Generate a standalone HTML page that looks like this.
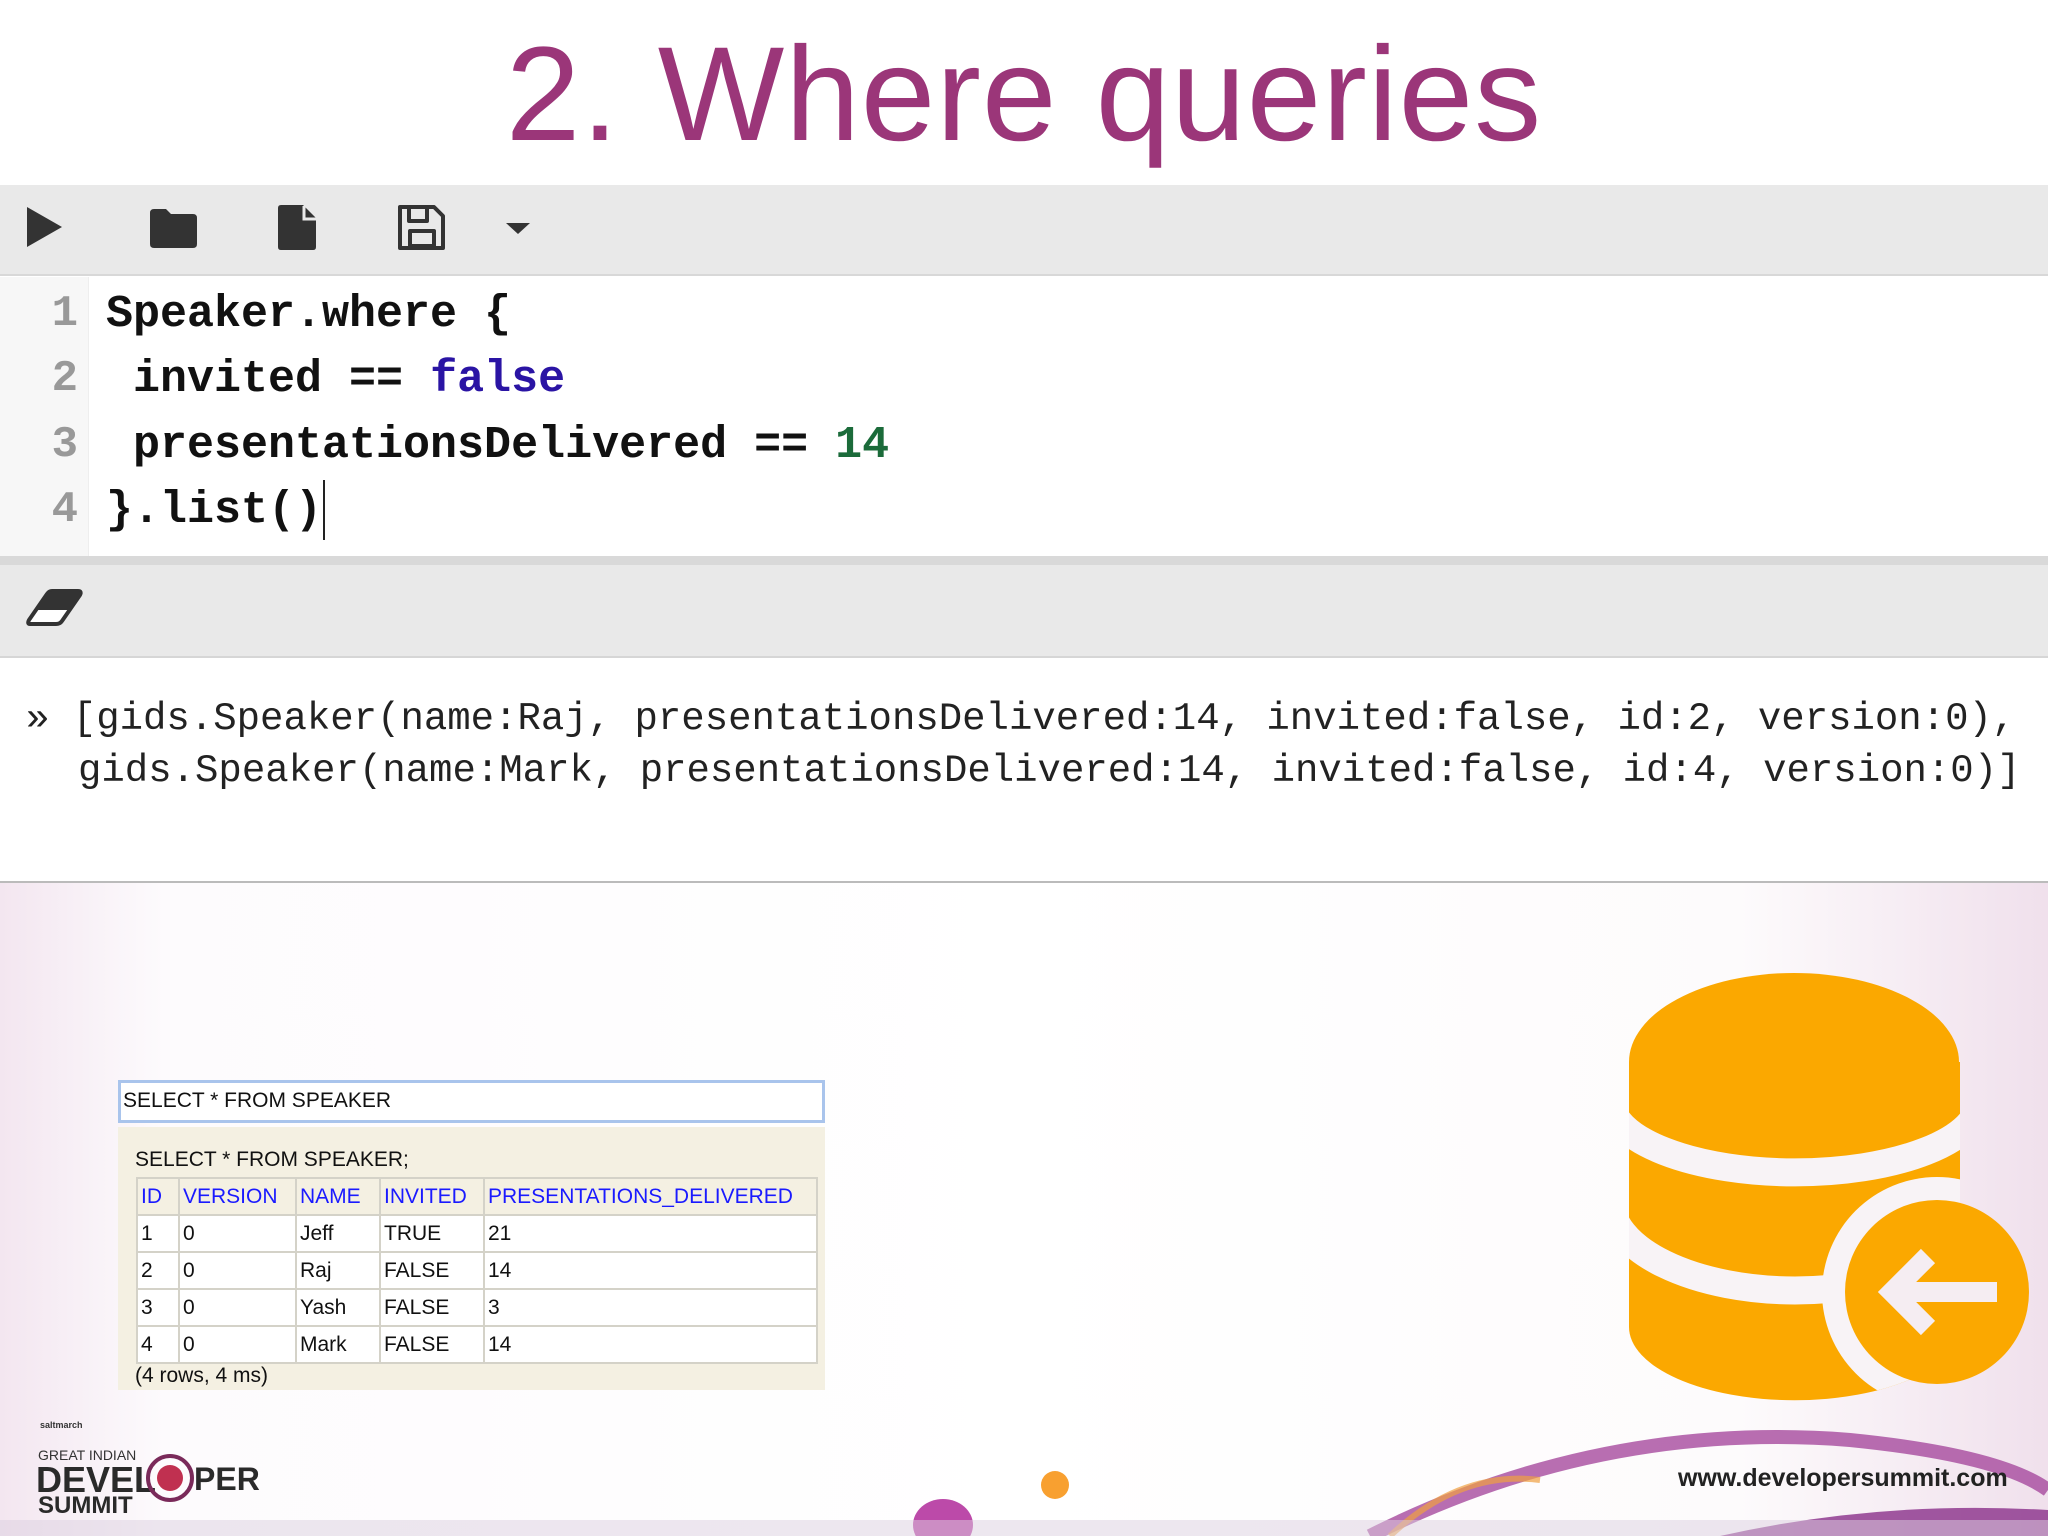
<!DOCTYPE html>
<html><head><meta charset="utf-8"><style>
*{margin:0;padding:0;box-sizing:border-box}
body{width:2048px;height:1536px;overflow:hidden;position:relative;background:#fff;font-family:"Liberation Sans",sans-serif}
.abs{position:absolute}
#title{left:0;width:2048px;top:20px;text-align:center;font-size:134px;color:#9b3679;font-family:"Liberation Sans",sans-serif;letter-spacing:1px;line-height:150px}
#tb{left:0;top:185px;width:2048px;height:91px;background:#e9e9e9;border-bottom:2px solid #d8d8d8}
#ed{left:0;top:277px;width:2048px;height:280px;background:#fff}
#gut{left:0;top:277px;width:89px;height:280px;background:#f7f7f7;border-right:1px solid #eee}
.ln{position:absolute;left:0;width:78px;text-align:right;font-family:"Liberation Mono",monospace;font-size:44px;color:#999;font-weight:bold}
.cd{position:absolute;left:106px;font-family:"Liberation Mono",monospace;font-size:45px;color:#111;white-space:pre;font-weight:bold;letter-spacing:0px}
#sep{left:0;top:556px;width:2048px;height:9px;background:#d9d9d9}
#eb{left:0;top:565px;width:2048px;height:93px;background:#e9e9e9;border-bottom:2px solid #d6d6d6}
#out{left:0;top:660px;width:2048px;height:223px;background:#fff;border-bottom:2px solid #bbb}
.o{position:absolute;font-family:"Liberation Mono",monospace;font-size:39px;color:#222;white-space:pre}
#inp{left:118px;top:1080px;width:707px;height:43px;border:3px solid #a9c4ec;background:#fff;font-size:21px;padding:6px 2px;color:#111}
#res{left:118px;top:1127px;width:707px;height:263px;background:#f4f0e2;font-size:21px;color:#111}
table{position:absolute;left:18px;top:50px;border-collapse:collapse;width:682px;background:#fff}
td,th{border:2px solid #d4d2c8;height:37px;text-align:left;font-weight:normal;padding:0 3px;font-size:21px}
th{color:#1a1aff;background:#f4f0e2}
</style></head><body>
<div class="abs" style="left:0;top:883px;width:2048px;height:653px;background:linear-gradient(90deg,#f3e6f0 0%,#fdfbfd 8%,#fff 50%,#fdfbfc 85%,#f0e0ec 100%)"></div>
<div class="abs" id="title">2. Where queries</div>
<div class="abs" id="tb">
<svg width="600" height="91" class="abs" style="left:0;top:0">
<path d="M27,22 L62,42 L27,62 Z" fill="#333"/>
<path d="M150,28 q0,-4 4,-4 h12 l5,5 h22 q4,0 4,4 v26 q0,4 -4,4 h-39 q-4,0 -4,-4 Z" fill="#333"/>
<path d="M281,20 h22 l13,13 v29 q0,3 -3,3 h-32 q-3,0 -3,-3 v-39 q0,-3 3,-3 Z" fill="#333"/>
<path d="M304,21 v13 h12" stroke="#e9e9e9" stroke-width="3" fill="none"/>
<path d="M400,22 h34 l9,9 v32 h-43 Z M409,24 v12 h18 v-12 M410,46 h24 v15 h-24 Z" stroke="#333" stroke-width="4" fill="none" stroke-linejoin="round"/>
<path d="M506,38 h24 l-12,11 Z" fill="#333"/>
</svg></div>
<div class="abs" id="ed"></div>
<div class="abs" id="gut">
<div class="ln" style="top:12px">1</div><div class="ln" style="top:77px">2</div><div class="ln" style="top:143px">3</div><div class="ln" style="top:208px">4</div>
</div>
<div class="abs" style="left:0;top:277px;width:2048px;height:280px">
<div class="cd" style="top:12px">Speaker.where {</div>
<div class="cd" style="top:77px"> invited == <span style="color:#2a14a4">false</span></div>
<div class="cd" style="top:143px"> presentationsDelivered == <span style="color:#1b6b3a">14</span></div>
<div class="cd" style="top:208px">}.list()</div>
<div class="abs" style="left:323px;top:203px;width:2px;height:60px;background:#222"></div>
</div>
<div class="abs" id="sep"></div>
<div class="abs" id="eb"><svg width="100" height="93" class="abs" style="left:0;top:0">
<path d="M52,26 h26 q4,0 2,4 l-18,26 q-2,3 -6,3 h-26 q-3,0 -1,-4 l18,-26 q2,-3 5,-3 Z" fill="#fff" stroke="#333" stroke-width="4" stroke-linejoin="round"/>
<path d="M52,26 h26 q4,0 2,4 l-10,15 h-34 l11,-16 q2,-3 5,-3 Z" fill="#333"/>
</svg></div>
<div class="abs" id="out">
<div class="o" style="left:26px;top:37px">» [gids.Speaker(name:Raj, presentationsDelivered:14, invited:false, id:2, version:0),</div>
<div class="o" style="left:78px;top:89px">gids.Speaker(name:Mark, presentationsDelivered:14, invited:false, id:4, version:0)]</div>
</div>
<div class="abs" id="inp">SELECT * FROM SPEAKER</div>
<div class="abs" id="res">
<div class="abs" style="left:17px;top:21px">SELECT * FROM SPEAKER;</div>
<table>
<tr><th style="width:42px">ID</th><th style="width:117px">VERSION</th><th style="width:84px">NAME</th><th style="width:104px">INVITED</th><th>PRESENTATIONS_DELIVERED</th></tr>
<tr><td>1</td><td>0</td><td>Jeff</td><td>TRUE</td><td>21</td></tr>
<tr><td>2</td><td>0</td><td>Raj</td><td>FALSE</td><td>14</td></tr>
<tr><td>3</td><td>0</td><td>Yash</td><td>FALSE</td><td>3</td></tr>
<tr><td>4</td><td>0</td><td>Mark</td><td>FALSE</td><td>14</td></tr>
</table>
<div class="abs" style="left:17px;top:237px">(4 rows, 4 ms)</div>
</div>
<svg class="abs" style="left:0;top:0" width="2048" height="1536">
<defs><clipPath id="body"><path d="M1629,1062 V1327 A165,73 0 0 0 1960,1327 V1062 Z"/></clipPath></defs>
<path d="M1370,1536 Q1600,1420 1850,1440 Q2000,1455 2048,1490" stroke="#a64a9e" stroke-width="14" fill="none" opacity="0.8"/>
<path d="M1720,1536 Q1880,1500 2048,1510 V1536 Z" fill="#8a2f8a" opacity="0.8"/>
<path d="M1390,1536 Q1460,1470 1540,1480" stroke="#f0a040" stroke-width="6" fill="none" opacity="0.7"/>
<path d="M1629,1062 V1327 A165,73 0 0 0 1960,1327 V1062 Z" fill="#fba800"/>
<g clip-path="url(#body)">
<path d="M1610,1100 A184,72 0 0 0 1980,1100" stroke="#f8f3f6" stroke-width="28" fill="none"/>
<path d="M1610,1200 A184,90 0 0 0 1980,1200" stroke="#f8f3f6" stroke-width="28" fill="none"/>
<circle cx="1937" cy="1292" r="115" fill="#f8f3f6"/>
</g>
<ellipse cx="1794" cy="1062" rx="165" ry="89" fill="#fba800"/>
<circle cx="1937" cy="1292" r="92" fill="#fba800"/>
<path d="M1997,1292 H1892 M1928,1256 L1892,1292 L1928,1328" stroke="#f5edf2" stroke-width="20" fill="none"/>
<ellipse cx="943" cy="1525" rx="30" ry="26" fill="#b02a9a" opacity="0.85"/>
<circle cx="1055" cy="1485" r="14" fill="#f8a030"/>
<rect x="0" y="1520" width="2048" height="16" fill="#dccfe0" opacity="0.5"/>
<text x="1678" y="1486" font-family="Liberation Sans,sans-serif" font-size="25" font-weight="bold" fill="#222">www.developersummit.com</text>
<text x="38" y="1460" font-family="Liberation Sans,sans-serif" font-size="14" fill="#333">GREAT INDIAN</text>
<text x="36" y="1492" font-family="Liberation Sans,sans-serif" font-size="36" font-weight="bold" fill="#2a2a2a">DEVEL</text>
<circle cx="170" cy="1478" r="22" fill="none" stroke="#7a2a5a" stroke-width="4"/>
<circle cx="170" cy="1478" r="13" fill="#c03050"/>
<text x="194" y="1490" font-family="Liberation Sans,sans-serif" font-size="32" font-weight="bold" fill="#2a2a2a">PER</text>
<text x="38" y="1513" font-family="Liberation Sans,sans-serif" font-size="24" font-weight="bold" fill="#2a2a2a">SUMMIT</text>
<text x="40" y="1428" font-family="Liberation Sans,sans-serif" font-size="9" font-weight="bold" fill="#333">saltmarch</text>
</svg>
</body></html>
